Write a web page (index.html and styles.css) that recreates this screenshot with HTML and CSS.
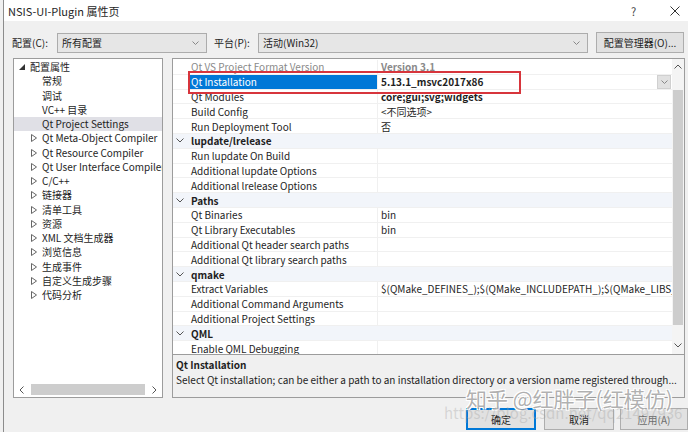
FILE: index.html
```html
<!DOCTYPE html>
<html lang="zh-CN">

<head>
    <meta charset="UTF-8">
    <title>NSIS-UI-Plugin 属性页</title>
    <link rel="stylesheet" href="styles.css">
</head>

<body>
    <div class="window">
        <div class="titlebar">
            <span class="title">NSIS-UI-Plugin 属性页</span>
            <span class="help">?</span>
            <span class="close">
                <svg width="10" height="10" viewBox="0 0 10 10"><path d="M0.5 0.5L9.5 9.5M9.5 0.5L0.5 9.5" stroke="#333" stroke-width="1" fill="none"/></svg>
            </span>
        </div>

        <div class="toolbar">
            <span class="lbl lbl-config">配置(C):</span>
            <div class="combo combo-config">
                <span>所有配置</span>
                <svg class="chev" width="7" height="4" viewBox="0 0 7 4"><path d="M0.5 0.5L3.5 3.5L6.5 0.5" stroke="#888" fill="none"/></svg>
            </div>
            <span class="lbl lbl-platform">平台(P):</span>
            <div class="combo combo-platform">
                <span>活动(Win32)</span>
                <svg class="chev" width="7" height="4" viewBox="0 0 7 4"><path d="M0.5 0.5L3.5 3.5L6.5 0.5" stroke="#888" fill="none"/></svg>
            </div>
            <button class="btn btn-manager">配置管理器(O)...</button>
        </div>

        <div class="main">
            <div class="tree">
                <ul class="tree-list">
                    <li class="node root"><svg class="tri" width="6" height="6" viewBox="0 0 6 6"><path d="M6 0V6H0Z" fill="#333"/></svg>配置属性</li>
                    <li class="node leaf">常规</li>
                    <li class="node leaf">调试</li>
                    <li class="node leaf">VC++ 目录</li>
                    <li class="node leaf selected">Qt Project Settings</li>
                    <li class="node"><svg class="tri" width="6" height="8" viewBox="0 0 6 8"><path d="M0.5 0.5L5.5 4L0.5 7.5Z" stroke="#666" fill="none"/></svg>Qt Meta-Object Compiler</li>
                    <li class="node"><svg class="tri" width="6" height="8" viewBox="0 0 6 8"><path d="M0.5 0.5L5.5 4L0.5 7.5Z" stroke="#666" fill="none"/></svg>Qt Resource Compiler</li>
                    <li class="node"><svg class="tri" width="6" height="8" viewBox="0 0 6 8"><path d="M0.5 0.5L5.5 4L0.5 7.5Z" stroke="#666" fill="none"/></svg>Qt User Interface Compiler</li>
                    <li class="node"><svg class="tri" width="6" height="8" viewBox="0 0 6 8"><path d="M0.5 0.5L5.5 4L0.5 7.5Z" stroke="#666" fill="none"/></svg>C/C++</li>
                    <li class="node"><svg class="tri" width="6" height="8" viewBox="0 0 6 8"><path d="M0.5 0.5L5.5 4L0.5 7.5Z" stroke="#666" fill="none"/></svg>链接器</li>
                    <li class="node"><svg class="tri" width="6" height="8" viewBox="0 0 6 8"><path d="M0.5 0.5L5.5 4L0.5 7.5Z" stroke="#666" fill="none"/></svg>清单工具</li>
                    <li class="node"><svg class="tri" width="6" height="8" viewBox="0 0 6 8"><path d="M0.5 0.5L5.5 4L0.5 7.5Z" stroke="#666" fill="none"/></svg>资源</li>
                    <li class="node"><svg class="tri" width="6" height="8" viewBox="0 0 6 8"><path d="M0.5 0.5L5.5 4L0.5 7.5Z" stroke="#666" fill="none"/></svg>XML 文档生成器</li>
                    <li class="node"><svg class="tri" width="6" height="8" viewBox="0 0 6 8"><path d="M0.5 0.5L5.5 4L0.5 7.5Z" stroke="#666" fill="none"/></svg>浏览信息</li>
                    <li class="node"><svg class="tri" width="6" height="8" viewBox="0 0 6 8"><path d="M0.5 0.5L5.5 4L0.5 7.5Z" stroke="#666" fill="none"/></svg>生成事件</li>
                    <li class="node"><svg class="tri" width="6" height="8" viewBox="0 0 6 8"><path d="M0.5 0.5L5.5 4L0.5 7.5Z" stroke="#666" fill="none"/></svg>自定义生成步骤</li>
                    <li class="node"><svg class="tri" width="6" height="8" viewBox="0 0 6 8"><path d="M0.5 0.5L5.5 4L0.5 7.5Z" stroke="#666" fill="none"/></svg>代码分析</li>
                </ul>
                <div class="hscroll">
                    <svg width="5" height="8" viewBox="0 0 5 8"><path d="M4.5 0.5L1 4L4.5 7.5" stroke="#555" fill="none"/></svg>
                    <div class="hthumb"></div>
                    <svg width="5" height="8" viewBox="0 0 5 8"><path d="M0.5 0.5L4 4L0.5 7.5" stroke="#555" fill="none"/></svg>
                </div>
            </div>

            <div class="right">
                <div class="grid">
                    <div class="rows">
                        <div class="row faded"><span class="gut"></span><span class="name">Qt VS Project Format Version</span><span class="val bold">Version 3.1</span></div>
                        <div class="row"><span class="gut"></span><span class="name active">Qt Installation</span><span class="val bold">5.13.1_msvc2017x86<span class="dd"><svg width="7" height="4" viewBox="0 0 7 4"><path d="M0.5 0.5L3.5 3.5L6.5 0.5" stroke="#888" fill="none"/></svg></span></span></div>
                        <div class="row"><span class="gut"></span><span class="name">Qt Modules</span><span class="val bold">core;gui;svg;widgets</span></div>
                        <div class="row"><span class="gut"></span><span class="name">Build Config</span><span class="val">&lt;不同选项&gt;</span></div>
                        <div class="row"><span class="gut"></span><span class="name">Run Deployment Tool</span><span class="val">否</span></div>
                        <div class="row cat"><span class="gut"><svg width="8" height="5" viewBox="0 0 8 5"><path d="M0.5 0.5L4 4L7.5 0.5" stroke="#555" fill="none"/></svg></span><span class="name">lupdate/lrelease</span></div>
                        <div class="row"><span class="gut"></span><span class="name">Run lupdate On Build</span><span class="val"></span></div>
                        <div class="row"><span class="gut"></span><span class="name">Additional lupdate Options</span><span class="val"></span></div>
                        <div class="row"><span class="gut"></span><span class="name">Additional lrelease Options</span><span class="val"></span></div>
                        <div class="row cat"><span class="gut"><svg width="8" height="5" viewBox="0 0 8 5"><path d="M0.5 0.5L4 4L7.5 0.5" stroke="#555" fill="none"/></svg></span><span class="name">Paths</span></div>
                        <div class="row"><span class="gut"></span><span class="name">Qt Binaries</span><span class="val">bin</span></div>
                        <div class="row"><span class="gut"></span><span class="name">Qt Library Executables</span><span class="val">bin</span></div>
                        <div class="row"><span class="gut"></span><span class="name">Additional Qt header search paths</span><span class="val"></span></div>
                        <div class="row"><span class="gut"></span><span class="name">Additional Qt library search paths</span><span class="val"></span></div>
                        <div class="row cat"><span class="gut"><svg width="8" height="5" viewBox="0 0 8 5"><path d="M0.5 0.5L4 4L7.5 0.5" stroke="#555" fill="none"/></svg></span><span class="name">qmake</span></div>
                        <div class="row"><span class="gut"></span><span class="name">Extract Variables</span><span class="val">$(QMake_DEFINES_);$(QMake_INCLUDEPATH_);$(QMake_LIBS_);$(QMake_CFLAGS_)</span></div>
                        <div class="row"><span class="gut"></span><span class="name">Additional Command Arguments</span><span class="val"></span></div>
                        <div class="row"><span class="gut"></span><span class="name">Additional Project Settings</span><span class="val"></span></div>
                        <div class="row cat"><span class="gut"><svg width="8" height="5" viewBox="0 0 8 5"><path d="M0.5 0.5L4 4L7.5 0.5" stroke="#555" fill="none"/></svg></span><span class="name">QML</span></div>
                        <div class="row"><span class="gut"></span><span class="name">Enable QML Debugging</span><span class="val"></span></div>
                    </div>
                    <div class="vscroll">
                        <svg class="arrow-up" width="8" height="5" viewBox="0 0 8 5"><path d="M0.5 4.5L4 1L7.5 4.5" stroke="#555" fill="none"/></svg>
                        <div class="vthumb"></div>
                        <svg class="arrow-down" width="8" height="5" viewBox="0 0 8 5"><path d="M0.5 0.5L4 4L7.5 0.5" stroke="#555" fill="none"/></svg>
                    </div>
                </div>
                <div class="desc">
                    <div class="desc-title">Qt Installation</div>
                    <div class="desc-text">Select Qt installation; can be either a path to an installation directory or a version name registered through...</div>
                </div>
            </div>
        </div>

        <div class="footer">
            <button class="btn btn-ok">确定</button>
            <button class="btn btn-cancel">取消</button>
            <button class="btn btn-apply">应用(A)</button>
        </div>

        <!-- annotation + watermark sit over the dialog -->
        <div class="mark-box"></div>
        <div class="watermark">知乎 @红胖子(红模仿)</div>
        <div class="watermark-url">https://blog.csdn.net/qq21497936</div>
    </div>
</body>

</html>
```

FILE: styles.css
```css
* {
    box-sizing: border-box;
}

body {
    margin: 0;
    width: 688px;
    height: 432px;
    overflow: hidden;
    background-color: #f0f0f0;
    font-family: "Noto Sans CJK SC", "Noto Sans", sans-serif;
    font-size: 10px;
    color: #1e1e1e;
}

svg {
    flex-shrink: 0;
}

.window {
    position: relative;
    margin-left: 3px;
    width: 685px;
    height: 432px;
    border-left: 1px solid #8c8c8c;
}

/* title bar */
.titlebar {
    height: 21px;
    background-color: #ffffff;
    display: flex;
    align-items: center;
    padding-left: 4px;
    font-size: 11px;
}

.title {
    flex: 1;
}

.help {
    width: 39px;
    color: #444;
}

.close {
    width: 18px;
    display: flex;
    align-items: center;
}

/* config row */
.toolbar {
    margin-top: 11px;
    height: 21px;
    display: flex;
    align-items: center;
    padding-left: 8px;
}

.lbl {
    white-space: nowrap;
}

.lbl-config {
    width: 45px;
}

.lbl-platform {
    width: 51px;
    padding-left: 7px;
}

.combo {
    height: 20px;
    background-color: #e6e6e6;
    border: 1px solid #acacac;
    display: flex;
    align-items: center;
    justify-content: space-between;
    padding: 0 7px 0 4px;
}

.combo-config {
    width: 150px;
}

.combo-platform {
    width: 330px;
}

.btn {
    font-family: inherit;
    font-size: 10px;
    color: #1e1e1e;
    height: 21px;
    background-color: #e1e1e1;
    border: 1px solid #adadad;
    padding: 0;
}

.btn-manager {
    margin-left: 8px;
    width: 88px;
}

/* main split */
.main {
    margin-top: 5px;
    height: 340px;
    display: flex;
    padding-left: 9px;
}

.tree {
    width: 150px;
    background-color: #ffffff;
    border: 1px solid #9c9c9c;
    display: flex;
    flex-direction: column;
    justify-content: space-between;
    overflow: hidden;
}

.tree-list {
    list-style: none;
    margin: 1px 0 0 0;
    padding: 0;
}

.node {
    height: 14.25px;
    line-height: 14.25px;
    white-space: nowrap;
    padding-left: 17px;
    display: flex;
    align-items: center;
}

.node .tri {
    margin-right: 5px;
}

.root {
    padding-left: 5px;
}

.leaf {
    padding-left: 28px;
}

.selected {
    background-color: #e0e0e6;
}

.hscroll {
    height: 13px;
    margin-bottom: 1px;
    display: flex;
    align-items: center;
    justify-content: space-between;
    padding: 0 5px;
}

.hthumb {
    width: 114px;
    height: 11px;
    background-color: #cdcdcd;
}

.right {
    margin-left: 9px;
    width: 513px;
    display: flex;
    flex-direction: column;
}

.grid {
    height: 297px;
    background-color: #ffffff;
    border: 1px solid #9c9c9c;
    display: flex;
    overflow: hidden;
}

.rows {
    flex: 1;
    overflow: hidden;
    padding-top: 1px;
}

.row {
    height: 14.8px;
    display: flex;
    align-items: center;
    border-bottom: 1px solid #f0f0f0;
    white-space: nowrap;
}

.gut {
    width: 16px;
    height: 100%;
    display: flex;
    align-items: center;
    justify-content: center;
    padding-right: 3px;
}

.name {
    width: 189px;
    height: 100%;
    padding-left: 2px;
    border-right: 1px solid #f0f0f0;
    display: flex;
    align-items: center;
}

.val {
    flex: 1;
    height: 100%;
    padding-left: 3px;
    display: flex;
    align-items: center;
    overflow: hidden;
    position: relative;
}

.bold {
    font-weight: bold;
}

.faded {
    color: #8a8a8a;
}

.active {
    background-color: #0078d7;
    color: #ffffff;
}

.cat {
    background-color: #f2f5fa;
    font-weight: bold;
}

.cat .name {
    border-right: none;
}

.dd {
    position: absolute;
    right: 1px;
    top: 0;
    width: 14px;
    height: 14px;
    background-color: #e1e1e1;
    border: 1px solid #d0d0d0;
    display: flex;
    align-items: center;
    justify-content: center;
}

.vscroll {
    width: 12px;
    background-color: #f4f4f4;
    display: flex;
    flex-direction: column;
    align-items: center;
    padding-top: 5px;
}

.vthumb {
    width: 10px;
    height: 235px;
    margin-top: 21px;
    background-color: #cdcdcd;
}

.arrow-down {
    margin-top: 18px;
}

.desc {
    height: 43px;
    border: 1px solid #9c9c9c;
    border-top: none;
    padding: 2px 3px;
}

.desc-title {
    font-weight: bold;
    line-height: 15px;
}

.desc-text {
    line-height: 15px;
    white-space: nowrap;
}

/* bottom buttons */
.footer {
    margin-top: 10px;
    display: flex;
    justify-content: flex-end;
    padding-right: 0px;
}

.footer .btn {
    width: 70px;
    height: 22px;
}

.btn-cancel {
    margin-left: 8px;
}

.btn-ok {
    border: 1px solid #0078d7;
    box-shadow: inset 0 0 0 1px #0078d7;
}

.footer .btn-apply {
    margin-left: 6px;
    width: 68px;
    color: #6d6d6d;
}

/* overlays */
.mark-box {
    position: absolute;
    left: 184px;
    top: 71px;
    width: 333px;
    height: 23px;
    border: 2px solid #d7353c;
}

.watermark {
    position: absolute;
    left: 462px;
    top: 383px;
    font-size: 21px;
    color: rgba(110, 110, 110, 0.55);
    text-shadow: 1px 1px 0 #fff, -1px -1px 0 #fff, 1px -1px 0 #fff, -1px 1px 0 #fff;
    white-space: nowrap;
}

.watermark-url {
    position: absolute;
    left: 440px;
    top: 402px;
    font-size: 15px;
    color: rgba(160, 160, 160, 0.35);
    white-space: nowrap;
}
```
